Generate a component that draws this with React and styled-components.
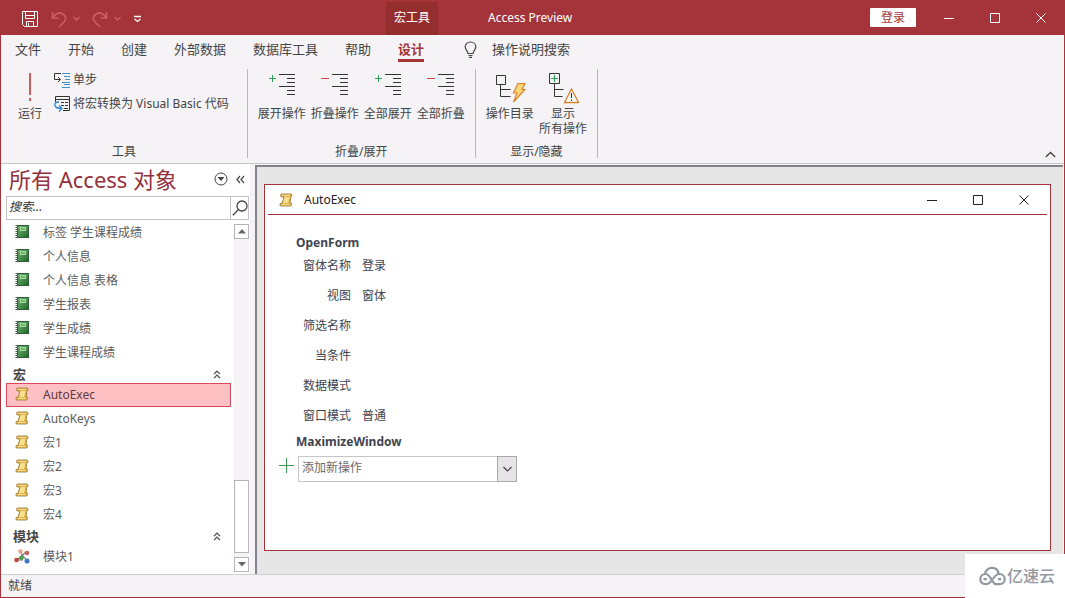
import React from "react";
import styled, { createGlobalStyle } from "styled-components";

const red = "#a4343a";
const paper = "#f6f3f6";
const ink = "#444444";

const GlobalStyle = createGlobalStyle`
  *, *::before, *::after { box-sizing: border-box; }
  body {
    margin: 0;
    font-family: "Noto Sans", "Noto Sans CJK SC", sans-serif;
    font-size: 12px;
    line-height: 16px;
    color: ${ink};
  }
  button, input, select { font: inherit; color: inherit; }
  button { background: none; border: 0; padding: 0; cursor: pointer; }
  h1, h2, h3, dl, dd, ul { margin: 0; padding: 0; list-style: none; }
  svg { display: block; flex: none; }
`;

const Shell = styled.div`
  position: relative;
  display: flex;
  flex-direction: column;
  height: 100vh;
  border: 1px solid ${red};
  border-top: 0;
  background: ${paper};
`;

/* Title bar */
const TitleBar = styled.header`
  flex: none;
  display: flex;
  align-items: center;
  height: 35px;
  background: ${red};
  color: #fff;
`;
const QuickAccess = styled.div`
  flex: 0 0 385px;
  display: flex;
  align-items: center;
  gap: 12px;
  padding: 2px 0 0 20px;
`;
const QuickButton = styled.button`
  display: flex;
  align-items: center;
  gap: 6px;
  color: ${(p) => (p.$dim ? "#c95f66" : "#fff")};
`;
const ContextTab = styled.div`
  align-self: stretch;
  display: flex;
  align-items: center;
  margin-top: 2px;
  padding: 0 8px 2px;
  background: #942d2d;
`;
const AppTitle = styled.h1`
  flex: 1;
  padding-left: 50px;
  font-size: 12px;
  font-weight: 400;
`;
const LoginButton = styled.button`
  width: 46px;
  height: 19px;
  margin-right: 10px;
  border-radius: 1px;
  background: #fff;
  color: ${red};
`;
const CaptionButton = styled.button`
  display: grid;
  place-items: center;
  width: 46px;
  height: 30px;
`;

/* Ribbon */
const Tabs = styled.nav`
  flex: none;
  display: flex;
  gap: 27px;
  height: 30px;
  padding: 4px 0 3px 14px;
  font-size: 13px;
`;
const Tab = styled.button`
  height: 23px;
  padding-bottom: 1px;
  border-bottom: 3px solid ${(p) => (p.$active ? red : "transparent")};
  color: ${(p) => (p.$active ? red : ink)};
  font-weight: ${(p) => (p.$active ? 700 : 400)};
`;
const TellMe = styled.button`
  display: flex;
  align-items: center;
  gap: 15px;
  height: 20px;
  margin-left: 13px;
`;
const Ribbon = styled.section`
  flex: none;
  display: flex;
  height: 99px;
  padding: 4px 0 5px;
  border-bottom: 1px solid #c9c6c9;
`;
const Group = styled.div`
  display: flex;
  flex-direction: column;
  justify-content: space-between;
  padding: 3px ${(p) => p.$pad}px 0;
  border-right: 1px solid #b9b6b9;
`;
const GroupItems = styled.div`
  display: flex;
  gap: 5px;
`;
const GroupName = styled.div`
  text-align: center;
  line-height: 12px;
`;
const BigButton = styled.button`
  display: flex;
  flex-direction: column;
  align-items: center;
  min-width: ${(p) => (p.$narrow ? 26 : 48)}px;
  line-height: 15px;
`;
const BigIcon = styled.span`
  height: 34px;
`;
const SmallStack = styled.div`
  display: flex;
  flex-direction: column;
  gap: 8px;
  padding: 0 2px 0 6px;
`;
const SmallButton = styled.button`
  display: flex;
  align-items: center;
  gap: 3px;
  white-space: nowrap;
`;
const CollapseButton = styled.button`
  align-self: flex-end;
  margin: 0 8px 0 auto;
`;

/* Work area */
const Work = styled.div`
  flex: 1;
  display: flex;
  min-height: 0;
`;
const Sidebar = styled.aside`
  flex: 0 0 249px;
  display: flex;
  flex-direction: column;
  background: #fff;
`;
const PaneTitle = styled.div`
  display: flex;
  align-items: center;
  gap: 8px;
  height: 32px;
  padding: 0 5px 2px 8px;
`;
const PaneHeading = styled.h2`
  flex: 1;
  font-size: 22px;
  line-height: 30px;
  font-weight: 400;
  color: #93303b;
`;
const SearchBox = styled.form`
  flex: none;
  display: flex;
  height: 24px;
  margin: 0 1px 0 5px;
  border: 1px solid #c3c1c3;
`;
const SearchInput = styled.input`
  flex: 1;
  min-width: 0;
  padding: 0 2px 3px;
  border: 0;
  outline: 0;
  font-style: italic;
  &::placeholder { color: #333; opacity: 1; }
`;
const SearchButton = styled.button`
  display: grid;
  place-items: center;
  width: 18px;
  border-left: 1px solid #c3c1c3;
`;
const PaneBody = styled.div`
  flex: 1;
  display: flex;
  min-height: 0;
`;
const ObjectList = styled.div`
  flex: 1;
  overflow: hidden;
  padding: 1px 3px 0 5px;
`;
const ListItem = styled.button`
  display: flex;
  align-items: center;
  gap: 13px;
  width: 100%;
  height: 24px;
  padding: 0 7px;
  border: 1px solid ${(p) => (p.$selected ? "#d9485a" : "transparent")};
  background: ${(p) => (p.$selected ? "#ffc0c4" : "transparent")};
  color: ${(p) => (p.$selected ? "#5c3a3d" : "#5c5c5c")};
  text-align: left;
`;
const ItemIcon = styled.span`
  flex: 0 0 16px;
  display: grid;
  place-items: center;
  padding-bottom: 2px;
`;
const ListHeader = styled.button`
  display: flex;
  align-items: center;
  justify-content: space-between;
  width: 100%;
  height: 18px;
  padding: 0 10px 0 7px;
  font-size: 13px;
  font-weight: 700;
`;
const ScrollBar = styled.div`
  flex: 0 0 15px;
  display: flex;
  flex-direction: column;
  margin-right: 1px;
  padding: 4px 0 2px;
`;
const ScrollArrow = styled.button`
  display: grid;
  place-items: center;
  height: 15px;
  border: 1px solid #b5b3b5;
  background: #fff;
`;
const ScrollTrack = styled.div`
  flex: 1;
  display: flex;
  align-items: flex-end;
  padding-bottom: 4px;
  background: ${paper};
`;
const ScrollThumb = styled.div`
  width: 100%;
  height: 73px;
  border: 1px solid #b5b3b5;
  background: #fff;
`;
const Canvas = styled.main`
  flex: 1;
  display: flex;
  margin: 1px 1px 0 5px;
  padding: 17px 12px 23px 7px;
  border-top: 2px solid #85838a;
  border-left: 2px solid #85838a;
  background: #e6e6e6;
`;
const DocWindow = styled.section`
  flex: 1;
  border: 1px solid ${red};
  background: #fff;
`;
const DocTitle = styled.div`
  display: flex;
  align-items: center;
  height: 30px;
  margin: 0 3px;
  padding-left: 11px;
  border-bottom: 1px solid ${red};
  color: #222;
`;
const DocName = styled.h2`
  flex: 1;
  padding-left: 11px;
  font-size: 12px;
  font-weight: 400;
`;
const DocBody = styled.div`
  padding: 20px 0 0 14px;
  color: #404450;
`;
const ActionName = styled.h3`
  padding-left: 17px;
  font-size: 12px;
  line-height: 16px;
`;
const Params = styled.dl`
  display: grid;
  grid-template-columns: 72px auto;
  grid-auto-rows: 30px;
  align-items: center;
  column-gap: 11px;
  margin-bottom: 3px;
`;
const ParamName = styled.dt`
  text-align: right;
`;
const AddRow = styled.label`
  display: flex;
  gap: 3px;
  margin-top: 6px;
`;
const SelectBox = styled.span`
  position: relative;
  width: 219px;
  height: 26px;
`;
const Select = styled.select`
  appearance: none;
  width: 100%;
  height: 100%;
  padding: 0 24px 3px 3px;
  border: 1px solid #c6c6c6;
  border-radius: 0;
  background: #fff;
  color: #6a6a6a;
`;
const SelectArrow = styled.span`
  position: absolute;
  top: 0;
  right: 0;
  display: grid;
  place-items: center;
  width: 20px;
  height: 100%;
  border: 1px solid #a9a9a9;
  background: #e6e4e6;
  pointer-events: none;
`;
const StatusBar = styled.footer`
  flex: none;
  height: 23px;
  padding: 3px 7px;
  border-top: 1px solid #d0ced0;
`;
const Watermark = styled.div`
  position: fixed;
  right: 0;
  bottom: 0;
  display: flex;
  align-items: center;
  gap: 1px;
  width: 100px;
  height: 44px;
  padding-left: 14px;
  background: #fff;
  color: #9297a0;
  font-size: 16px;
  font-weight: 500;
`;

/* Icons */
const Svg = ({ w, h, sw = 1, children }) => (
  <svg width={w} height={h} viewBox={`0 0 ${w} ${h}`} fill="none" stroke="currentColor" strokeWidth={sw} aria-hidden="true">
    {children}
  </svg>
);
const SaveIcon = () => (
  <Svg w={18} h={18}>
    <path d="M1.5 1.5h15v15h-13l-2-2zM4.5 1.5v7h9v-7M4.5 5.5h9M5.5 16.5v-5h7v5M7.5 13v3.500" />
  </Svg>
);
const UndoIcon = () => (
  <Svg w={16} h={18} sw={1.6}>
    <path d="M1.500 2v6h6M2 7.500C4 3.500 8 2 11 3.500c4.500 2 4.500 6 2 8.500L8 17" />
  </Svg>
);
const RedoIcon = () => (
  <Svg w={16} h={18} sw={1.6}>
    <path d="M14.500 2v6h-6M14 7.500C12 3.500 8 2 5 3.500 .5 5.500 .5 9.500 3 12l5 5" />
  </Svg>
);
const SmallChevron = () => <Svg w={7} h={5} sw={1.400}><path d="M.5 1l3 3 3-3" /></Svg>;
const MoreIcon = () => <Svg w={9} h={8} sw={1.300}><path d="M1 1.500h7M1.500 4l3 2.500L7.500 4" /></Svg>;
const MinIcon = () => <Svg w={10} h={10}><path d="M0 5.500h10" /></Svg>;
const MaxIcon = () => <Svg w={10} h={10}><path d="M.5.5h9v9H.5z" /></Svg>;
const CloseIcon = () => <Svg w={10} h={10}><path d="M.5.5l9 9M9.500.5l-9 9" /></Svg>;
const BulbIcon = () => (
  <Svg w={13} h={17} sw={1.200}>
    <path d="M4 12.500C4 10 1.200 9 1.200 5.800 1.200 3 3.500 1 6.500 1s5.300 2 5.300 4.800C11.800 9 9 10 9 12.500zM4.500 14.500h4M5 16.300h3" />
  </Svg>
);
const RunIcon = () => (
  <Svg w={6} h={32} sw={2}>
    <path stroke="#cf5a60" d="M3 1v22M3 26v3" />
  </Svg>
);
const StepIcon = () => (
  <Svg w={16} h={16}>
    <path stroke="#333" d="M7 1.500H.5v6h6M4 5l2.500 2.500L4 10" />
    <path stroke="#3d8fc6" d="M8 1.500h8M10 4.500h6M11 7.500h5M8 10.500h8M10 12.500h6M8 15.500h8" />
  </Svg>
);
const ConvertIcon = () => (
  <Svg w={16} h={16}>
    <path stroke="#333" d="M1.500 6V.5h14v14H9M1.500 3.500h14M7 6.500h3M11 6.500h3M7 9.500h3M11 9.500h3M10 12.500h4" />
    <path stroke="#2f86cc" strokeWidth="1.300" d="M5 6C1 6 .5 8 1 9.500 1.500 12 4 12.500 8 12.500M5 9.500l3 3-3 3" />
  </Svg>
);
const ListIcon = ({ minus }) => (
  <Svg w={28} h={24}>
    <path stroke={minus ? "#d0454c" : "#2f9e5b"} d={minus ? "M0 6.500h8" : "M1 6.500h7M4.500 3v7"} />
    <path stroke="#333" d="M11 2.500h16M19 6.500h8M19 10.500h8M11 14.500h16M19 18.500h8M19 22.500h8" />
  </Svg>
);
const CatalogIcon = () => (
  <Svg w={32} h={32}>
    <path stroke="#333" d="M2.500 3.500h9v9h-9zM6.500 12.500v12h10M6.500 17.500h10" />
    <path stroke="#d9822b" strokeWidth="1.200" fill="#ffd978" d="M24 11.500h7l-3 6h3L19.500 30l3.500-9h-3.500z" />
  </Svg>
);
const ShowAllIcon = () => (
  <Svg w={32} h={32}>
    <path stroke="#333" d="M2.500 1.500h10v10h-10zM7.500 11.500v13h8M7.500 17.500h9" />
    <path stroke="#2f9e5b" strokeWidth="1.200" d="M7.500 3v7M4 6.500h7" />
    <path stroke="#d9822b" strokeWidth="1.300" fill="#fff" d="M24.500 17l7 13.500h-14z" />
    <path stroke="#333" strokeWidth="1.200" d="M24.500 21v5M24.500 27.500v1.500" />
  </Svg>
);
const CaretUp = () => <Svg w={11} h={7} sw={1.400}><path d="M.8 6l4.700-4.500L10.200 6" /></Svg>;
const MenuCircle = () => (
  <Svg w={14} h={14}>
    <circle cx="7" cy="7" r="6" />
    <path fill="currentColor" stroke="none" d="M3.500 5h7L7 9z" />
  </Svg>
);
const DoubleLeft = () => <Svg w={9} h={9} sw={1.200}><path d="M4 1L1 4.500 4 8M8 1L5 4.500 8 8" /></Svg>;
const DoubleUp = () => <Svg w={8} h={9} sw={1.200}><path d="M1 4.200l3-3 3 3M1 8.200l3-3 3 3" /></Svg>;
const SearchIcon = () => (
  <Svg w={16} h={16} sw={1.300}>
    <circle cx="10" cy="6" r="5" />
    <path d="M6.500 9.500L.8 15.200" />
  </Svg>
);
const BookIcon = () => (
  <svg width="14" height="14" viewBox="0 0 14 14" aria-hidden="true">
    <defs>
      <linearGradient id="cover" x1="0" y1="0" x2="1" y2="1">
        <stop offset="0" stopColor="#6fb56c" />
        <stop offset="1" stopColor="#23692f" />
      </linearGradient>
    </defs>
    <rect x="2" y="0" width="12" height="13" fill="#2c5f33" />
    <rect x="3" y="1" width="10" height="11" fill="url(#cover)" />
    <rect x="5" y="2" width="6" height="4" fill="#a8d9a2" />
    <rect x="6" y="3" width="4" height="2" fill="#6db56c" />
    <path d="M1.500 0v13" stroke="#555" strokeWidth="2" strokeDasharray="1 1" />
  </svg>
);
const MacroIcon = () => (
  <svg width="14" height="14" viewBox="0 0 14 14" aria-hidden="true">
    <path d="M2.500 1h9.500c1.300 0 1.300 2.500 0 2.500L11 10h1c1 0 .8 3-.8 3H2C.5 13 .5 10.500 2 10.300h1L5 4H2.500C1.300 4 1.300 1 2.500 1z" fill="#e3b64c" stroke="#927029" strokeWidth=".8" />
    <path d="M5.500 4h5L9 10H4z" fill="#f7df8d" />
    <path d="M3 2.300h8M2.500 11.700h8" stroke="#fff0b8" strokeWidth=".8" />
  </svg>
);
const ModuleIcon = () => (
  <svg width="16" height="15" viewBox="0 0 16 15" aria-hidden="true">
    <path d="M6 3l7 9M12 3L3 11M3 11l6 0" stroke="#777" strokeWidth="1.200" />
    <circle cx="6.500" cy="2.500" r="2.200" fill="#e3a38d" />
    <circle cx="13" cy="4" r="2.300" fill="#c9645c" />
    <circle cx="2.500" cy="11" r="2.300" fill="#c2443f" />
    <circle cx="7.500" cy="9" r="2.300" fill="#4da04f" />
    <circle cx="13" cy="12" r="2.500" fill="#3d73c9" />
  </svg>
);
const Triangle = ({ down }) => (
  <svg width="8" height="5" viewBox="0 0 8 5" aria-hidden="true">
    <path fill="#666" d={down ? "M0 0h8L4 4.500z" : "M0 4.500h8L4 0z"} />
  </svg>
);
const PlusIcon = () => <Svg w={16} h={18}><path stroke="#3a9a4c" d="M0 9.500h15M7.500 2v15" /></Svg>;
const SelectChevron = () => <Svg w={9} h={6} sw={1.200}><path stroke="#444" d="M.5 1l4 4 4-4" /></Svg>;
const CloudLogo = () => (
  <Svg w={27} h={20} sw={2.200}>
    <path d="M5.800 8C7 4 9.600 1.800 13 1.800c3.800 0 6.300 2.500 6.600 6.200" />
    <path d="M12.500 14.500C11 17 9.500 18.200 6.500 18.200 3.500 18.200 1.300 16 1.300 13.200S3.500 8 6.500 8c4.500 0 6.500 8 9.500 10.200h4.500c3 0 5.200-2.200 5.200-5S23.500 8 20.500 8c-3.200 0-5 2.500-6.500 5" />
    <path d="M4.500 13.200h3.200M19 13.200h3.200" />
  </Svg>
);

const tabs = ["文件", "开始", "创建", "外部数据", "数据库工具", "帮助", "设计"];
const reports = ["标签 学生课程成绩", "个人信息", "个人信息 表格", "学生报表", "学生成绩", "学生课程成绩"];
const macros = ["AutoExec", "AutoKeys", "宏1", "宏2", "宏3", "宏4"];
const params = [
  ["窗体名称", "登录"],
  ["视图", "窗体"],
  ["筛选名称", ""],
  ["当条件", ""],
  ["数据模式", ""],
  ["窗口模式", "普通"],
];
const foldButtons = [
  ["展开操作", false],
  ["折叠操作", true],
  ["全部展开", false],
  ["全部折叠", true],
];

const WindowControls = () => (
  <>
    <CaptionButton aria-label="最小化"><MinIcon /></CaptionButton>
    <CaptionButton aria-label="最大化"><MaxIcon /></CaptionButton>
    <CaptionButton aria-label="关闭"><CloseIcon /></CaptionButton>
  </>
);

const Item = ({ icon, selected, children }) => (
  <ListItem $selected={selected}>
    <ItemIcon>{icon}</ItemIcon>
    {children}
  </ListItem>
);

export default function App() {
  return (
    <>
      <GlobalStyle />
      <Shell>
        <TitleBar>
          <QuickAccess>
            <QuickButton aria-label="保存"><SaveIcon /></QuickButton>
            <QuickButton $dim aria-label="撤消"><UndoIcon /><SmallChevron /></QuickButton>
            <QuickButton $dim aria-label="恢复"><RedoIcon /><SmallChevron /></QuickButton>
            <QuickButton aria-label="自定义快速访问工具栏"><MoreIcon /></QuickButton>
          </QuickAccess>
          <ContextTab>宏工具</ContextTab>
          <AppTitle>Access Preview</AppTitle>
          <LoginButton>登录</LoginButton>
          <WindowControls />
        </TitleBar>

        <Tabs>
          {tabs.map((t) => (
            <Tab key={t} $active={t === "设计"}>{t}</Tab>
          ))}
          <TellMe><BulbIcon />操作说明搜索</TellMe>
        </Tabs>

        <Ribbon>
          <Group $pad={16}>
            <GroupItems>
              <BigButton $narrow><BigIcon><RunIcon /></BigIcon>运行</BigButton>
              <SmallStack>
                <SmallButton><StepIcon />单步</SmallButton>
                <SmallButton><ConvertIcon />将宏转换为 Visual Basic 代码</SmallButton>
              </SmallStack>
            </GroupItems>
            <GroupName>工具</GroupName>
          </Group>
          <Group $pad={10}>
            <GroupItems>
              {foldButtons.map(([name, minus]) => (
                <BigButton key={name}><BigIcon><ListIcon minus={minus} /></BigIcon>{name}</BigButton>
              ))}
            </GroupItems>
            <GroupName>折叠/展开</GroupName>
          </Group>
          <Group $pad={10}>
            <GroupItems>
              <BigButton><BigIcon><CatalogIcon /></BigIcon>操作目录</BigButton>
              <BigButton><BigIcon><ShowAllIcon /></BigIcon>显示<br />所有操作</BigButton>
            </GroupItems>
            <GroupName>显示/隐藏</GroupName>
          </Group>
          <CollapseButton aria-label="折叠功能区"><CaretUp /></CollapseButton>
        </Ribbon>

        <Work>
          <Sidebar>
            <PaneTitle>
              <PaneHeading>所有 Access 对象</PaneHeading>
              <button aria-label="选择类别"><MenuCircle /></button>
              <button aria-label="折叠导航窗格"><DoubleLeft /></button>
            </PaneTitle>
            <SearchBox onSubmit={(e) => e.preventDefault()}>
              <SearchInput aria-label="搜索" placeholder="搜索..." />
              <SearchButton aria-label="搜索"><SearchIcon /></SearchButton>
            </SearchBox>
            <PaneBody>
              <ObjectList>
                {reports.map((r) => <Item key={r} icon={<BookIcon />}>{r}</Item>)}
                <ListHeader>宏<DoubleUp /></ListHeader>
                {macros.map((m) => (
                  <Item key={m} icon={<MacroIcon />} selected={m === "AutoExec"}>{m}</Item>
                ))}
                <ListHeader>模块<DoubleUp /></ListHeader>
                <Item icon={<ModuleIcon />}>模块1</Item>
              </ObjectList>
              <ScrollBar>
                <ScrollArrow aria-label="向上滚动"><Triangle /></ScrollArrow>
                <ScrollTrack><ScrollThumb /></ScrollTrack>
                <ScrollArrow aria-label="向下滚动"><Triangle down /></ScrollArrow>
              </ScrollBar>
            </PaneBody>
          </Sidebar>

          <Canvas>
            <DocWindow>
              <DocTitle>
                <MacroIcon />
                <DocName>AutoExec</DocName>
                <WindowControls />
              </DocTitle>
              <DocBody>
                <ActionName>OpenForm</ActionName>
                <Params>
                  {params.map(([name, value]) => (
                    <React.Fragment key={name}>
                      <ParamName>{name}</ParamName>
                      <dd>{value}</dd>
                    </React.Fragment>
                  ))}
                </Params>
                <ActionName>MaximizeWindow</ActionName>
                <AddRow>
                  <PlusIcon />
                  <SelectBox>
                    <Select aria-label="添加新操作" defaultValue="">
                      <option value="">添加新操作</option>
                    </Select>
                    <SelectArrow><SelectChevron /></SelectArrow>
                  </SelectBox>
                </AddRow>
              </DocBody>
            </DocWindow>
          </Canvas>
        </Work>

        <StatusBar>就绪</StatusBar>
        <Watermark><CloudLogo />亿速云</Watermark>
      </Shell>
    </>
  );
}
